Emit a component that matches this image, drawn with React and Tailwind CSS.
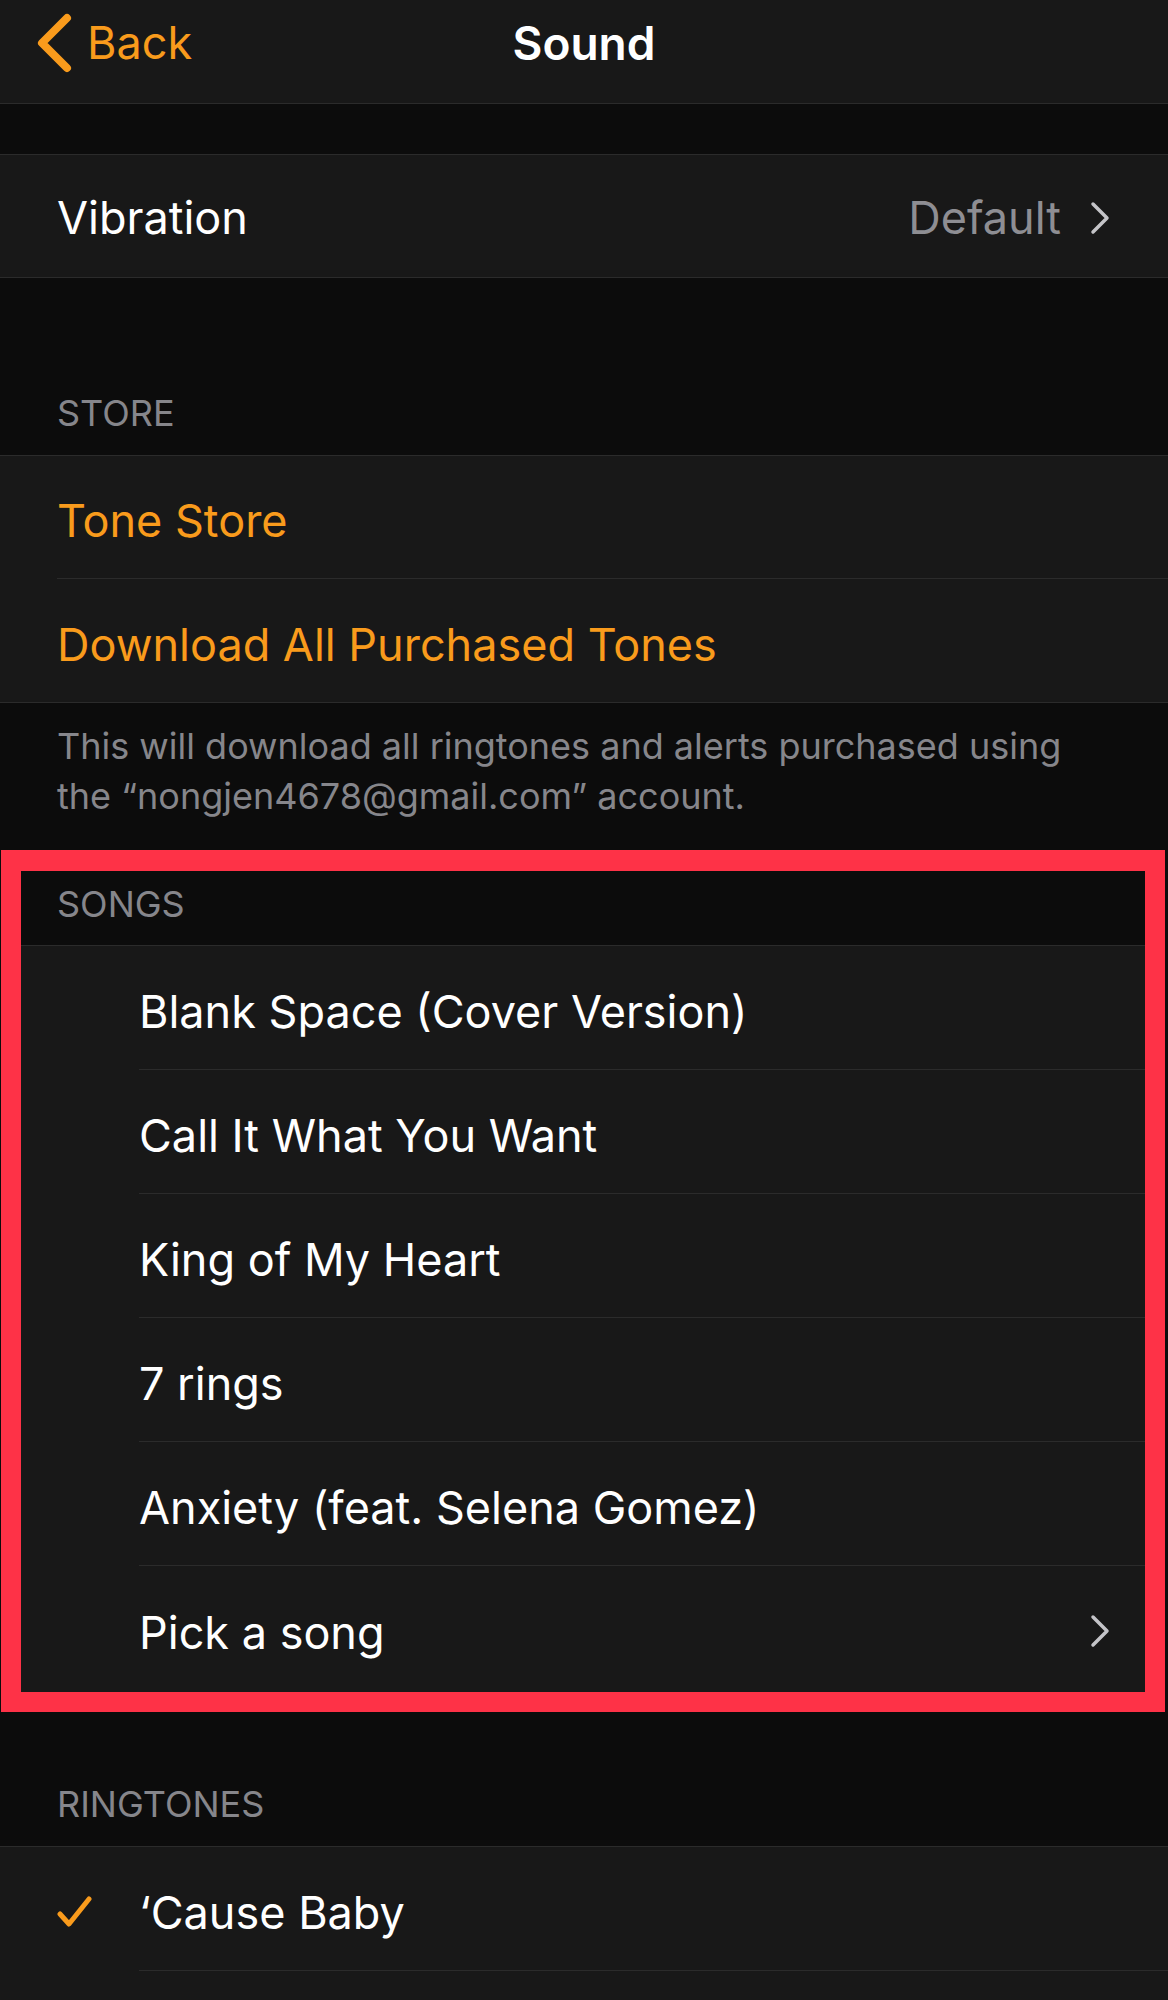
import React from 'react';

const songs = [
  'Blank Space (Cover Version)',
  'Call It What You Want',
  'King of My Heart',
  '7 rings',
  'Anxiety (feat. Selena Gomez)',
];

// small disclosure arrow used on the right of rows
function Chevron() {
  return (
    <svg width="22" height="36" viewBox="0 0 22 36" fill="none" className="text-[#c4c4c8]">
      <polyline points="4,4 18,18 4,32" stroke="currentColor" strokeWidth="3.5" strokeLinecap="round" strokeLinejoin="round" />
    </svg>
  );
}

function SectionLabel({ children, className }) {
  return (
    <div className={`flex items-end text-[36px] leading-[44px] text-[#86868b] ${className}`}>
      {children}
    </div>
  );
}

export default function App() {
  return (
    <div className="min-h-[2000px] w-[1168px] overflow-hidden bg-[#0c0c0c] font-['Inter',sans-serif] text-white">
      {/* nav bar */}
      <div className="grid h-[104px] grid-cols-[1fr_auto_1fr] items-center border-b border-[#2b2b2b] bg-[#181818] pb-[18px]">
        <div className="flex items-center gap-[15px] pl-[36px] text-[#f99b1c]">
          <svg width="36" height="60" viewBox="0 0 36 60" fill="none">
            <polyline points="31,5 6,30 31,55" stroke="currentColor" strokeWidth="8" strokeLinecap="round" strokeLinejoin="round" />
          </svg>
          <span className="text-[45px] leading-none">Back</span>
        </div>
        <div className="text-[46px] font-semibold leading-none">Sound</div>
        <div />
      </div>

      <div className="h-[50px]" />

      {/* vibration */}
      <div className="flex h-[124px] items-center justify-between border-y border-[#2b2b2b] bg-[#181818] pl-[57px] pr-[57px] pt-[4px]">
        <span className="text-[45px]">Vibration</span>
        <div className="flex items-center gap-[28px]">
          <span className="text-[45px] text-[#8e8e93]">Default</span>
          <Chevron />
        </div>
      </div>

      <SectionLabel className="h-[177px] pb-[20px] pl-[57px]">STORE</SectionLabel>

      <div className="border-y border-[#2b2b2b] bg-[#181818] text-[45px] text-[#f99b1c]">
        <div className="pl-[57px]">
          <div className="flex h-[123px] items-center border-b border-[#2b2b2b] pt-[7px]">Tone Store</div>
        </div>
        <div className="flex h-[123px] items-center pl-[57px] pt-[8px]">Download All Purchased Tones</div>
      </div>

      <p className="px-[57px] pb-[29px] pt-[18px] text-[36px] leading-[50px] text-[#86868b]">
        This will download all ringtones and alerts purchased using
        <br />
        the “nongjen4678@gmail.com” account.
      </p>

      {/* highlighted songs section */}
      <div className="ml-[1px] w-[1164px] border-[20px] border-t-[21px] border-[#fe3247]">
        <SectionLabel className="h-[75px] border-b border-[#2b2b2b] pb-[19px] pl-[36px]">SONGS</SectionLabel>
        <div className="bg-[#181818] text-[45px]">
          {songs.map((s) => (
            <div key={s} className="pl-[118px]">
              <div className="flex h-[124px] items-center border-b border-[#2b2b2b] pt-[8px]">{s}</div>
            </div>
          ))}
          <div className="flex h-[126px] items-center justify-between pl-[118px] pr-[34px] pt-[4px]">
            <span className="pt-[4px]">Pick a song</span>
            <Chevron />
          </div>
        </div>
      </div>

      <SectionLabel className="h-[134px] pb-[20px] pl-[57px]">RINGTONES</SectionLabel>

      <div className="border-t border-[#2b2b2b] bg-[#181818] text-[45px]">
        <div className="flex h-[124px]">
          <div className="flex w-[139px] items-center pl-[57px] pt-[6px] text-[#f99b1c]">
            <svg width="36" height="32" viewBox="0 0 36 32" fill="none">
              <polyline points="3,18 12,28 32,3" stroke="currentColor" strokeWidth="5" strokeLinecap="round" strokeLinejoin="round" />
            </svg>
          </div>
          <div className="flex flex-1 items-center border-b border-[#2b2b2b] pt-[8px]">‘Cause Baby</div>
        </div>
        <div className="h-[124px]" />
      </div>
    </div>
  );
}
